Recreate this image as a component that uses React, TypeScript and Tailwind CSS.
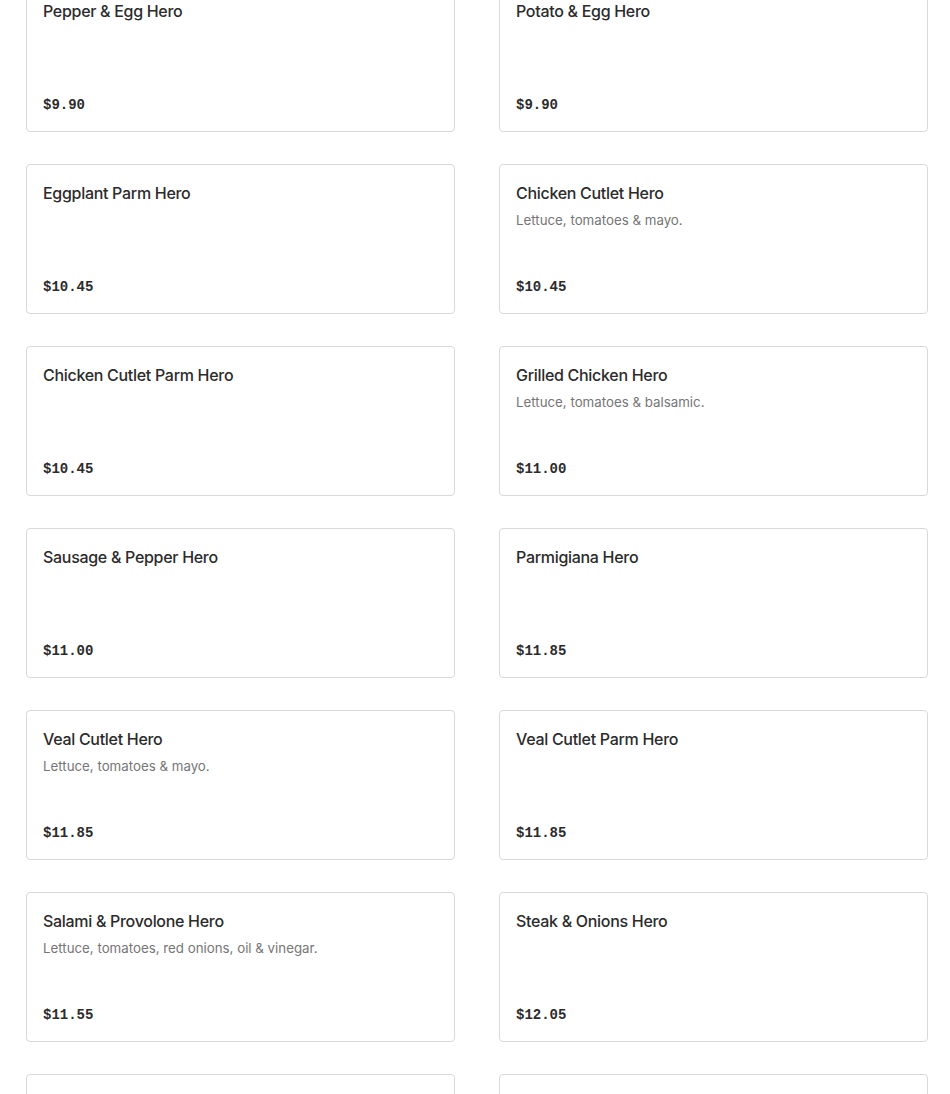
import React from "react";

type Item = { name: string; desc?: string; price: string };

const items: Item[] = [
  { name: "Pepper & Egg Hero", price: "$9.90" },
  { name: "Potato & Egg Hero", price: "$9.90" },
  { name: "Eggplant Parm Hero", price: "$10.45" },
  { name: "Chicken Cutlet Hero", desc: "Lettuce, tomatoes & mayo.", price: "$10.45" },
  { name: "Chicken Cutlet Parm Hero", price: "$10.45" },
  { name: "Grilled Chicken Hero", desc: "Lettuce, tomatoes & balsamic.", price: "$11.00" },
  { name: "Sausage & Pepper Hero", price: "$11.00" },
  { name: "Parmigiana Hero", price: "$11.85" },
  { name: "Veal Cutlet Hero", desc: "Lettuce, tomatoes & mayo.", price: "$11.85" },
  { name: "Veal Cutlet Parm Hero", price: "$11.85" },
  { name: "Salami & Provolone Hero", desc: "Lettuce, tomatoes, red onions, oil & vinegar.", price: "$11.55" },
  { name: "Steak & Onions Hero", price: "$12.05" },
  { name: "", price: "" },
  { name: "", price: "" },
];

function Card({ item }: { item: Item }) {
  return (
    <div className="h-[150px] border border-[#d9d9d9] rounded-[4px] bg-white px-4 pt-[16px] pb-[16px] flex flex-col">
      <div className="text-[16px] leading-[24px] font-medium text-[#2b2b2b] font-['Inter',sans-serif] tracking-[-0.3px]">
        {item.name}
      </div>
      {item.desc && (
        <div className="mt-[5px] text-[13.3px] leading-[20px] text-[#767676] font-['Inter',sans-serif]">
          {item.desc}
        </div>
      )}
      <div className="mt-auto text-[14px] leading-[20px] font-bold text-[#2b2b2b] font-['Liberation_Mono',monospace]">
        {item.price}
      </div>
    </div>
  );
}

export default function App() {
  return (
    <div className="bg-white h-[1094px] overflow-hidden">
      <div className="mt-[-18px] pl-[26px] grid grid-cols-[429px_429px] gap-x-[44px] gap-y-[32px]">
        {items.map((it, i) => (
          <Card key={i} item={it} />
        ))}
      </div>
    </div>
  );
}
